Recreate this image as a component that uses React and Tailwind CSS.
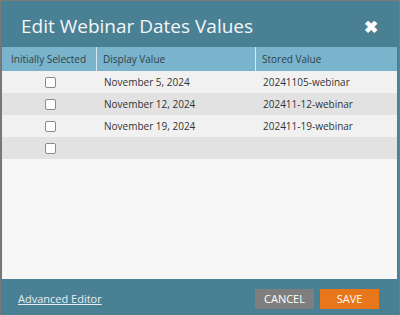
export default function App() {
  const rows = [
    ["November 5, 2024", "20241105-webinar"],
    ["November 12, 2024", "202411-12-webinar"],
    ["November 19, 2024", "202411-19-webinar"],
    ["", ""],
  ];
  const Box = () => (
    <span className="block w-[11px] h-[11px] rounded-[2px] border border-[#8a8a8a] bg-white" />
  );
  return (
    <div
      className="w-[400px] h-[315px] flex flex-col bg-[#4a8093] border-t border-l border-r border-[#7a7a7a] overflow-hidden"
      style={{ fontFamily: '"Open Sans", sans-serif' }}
    >
      <div className="h-[46px] flex items-center justify-between pl-[20px] pr-[21px] pt-[4px]">
        <span className="text-[19px] text-[#f3f6f7] leading-none">Edit Webinar Dates Values</span>
        <span className="text-white text-[17px] font-bold leading-none">✖</span>
      </div>
      <div className="flex-1 ml-px mr-[2px] bg-[#f7f7f7] flex flex-col">
        <div className="flex h-[24px] bg-[#7ab3cc] text-[10px] text-[#2f3f48] items-center">
          <div className="w-[95px] h-full flex items-center pl-[9px] border-r border-[#d5e8f0]">Initially Selected</div>
          <div className="w-[159px] h-full flex items-center pl-[6px] border-r border-[#d5e8f0]">Display Value</div>
          <div className="flex-1 h-full flex items-center pl-[6px]">Stored Value</div>
        </div>
        {rows.map((r, i) => (
          <div
            key={i}
            className={`flex h-[22px] items-center text-[10px] text-[#333333] ${i % 2 === 0 ? "bg-[#f1f1f1]" : "bg-[#e2e2e2]"}`}
          >
            <div className="w-[95px] flex justify-center pl-[1px]"><Box /></div>
            <div className="w-[159px] pl-[7px]">{r[0]}</div>
            <div className="flex-1 pl-[7px]">{r[1]}</div>
          </div>
        ))}
      </div>
      <div className="h-[36px] flex items-center justify-between pl-[17px] pr-[20px] pt-[4px]">
        <span className="text-[11px] text-[#e6eef2] underline">Advanced Editor</span>
        <div className="flex gap-[6px]">
          <button className="w-[59px] h-[20px] bg-[#7f7f7f] text-white text-[11px]">CANCEL</button>
          <button className="w-[59px] h-[20px] bg-[#e8761b] text-white text-[11px]">SAVE</button>
        </div>
      </div>
    </div>
  );
}
